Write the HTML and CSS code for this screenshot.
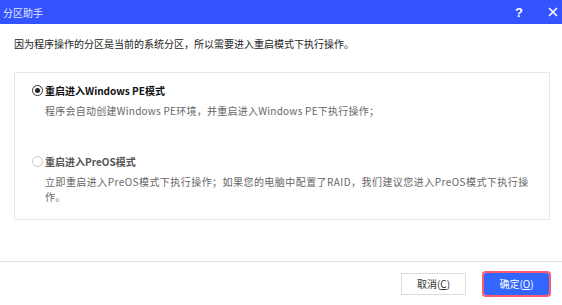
FILE: index.html
```html
<!DOCTYPE html>
<html lang="zh-CN">

<head>
    <meta charset="UTF-8">
    <title>分区助手</title>
    <link rel="stylesheet" href="styles.css">
</head>

<body>
    <div class="dialog">
        <div class="titlebar">
            <span class="title">分区助手</span>
            <div class="title-btns">
                <span class="tbtn">?</span>
                <span class="tbtn close">
                    <svg width="10" height="10" viewBox="0 0 10 10">
                        <path d="M1 1L9 9M9 1L1 9" stroke="#fff" stroke-width="1.6" />
                    </svg>
                </span>
            </div>
        </div>

        <div class="content">
            <p class="intro">因为程序操作的分区是当前的系统分区，所以需要进入重启模式下执行操作。</p>

            <div class="panel">
                <div class="option">
                    <div class="opt-head">
                        <span class="radio checked"></span>
                        <span class="opt-title">重启进入Windows PE模式</span>
                    </div>
                    <p class="opt-desc">程序会自动创建Windows PE环境，并重启进入Windows PE下执行操作；</p>
                </div>
                <div class="option second">
                    <div class="opt-head">
                        <span class="radio"></span>
                        <span class="opt-title muted">重启进入PreOS模式</span>
                    </div>
                    <p class="opt-desc">立即重启进入PreOS模式下执行操作；如果您的电脑中配置了RAID，我们建议您进入PreOS模式下执行操作。</p>
                </div>
            </div>
        </div>

        <div class="footer">
            <button class="btn">取消(<u>C</u>)</button>
            <button class="btn primary">确定(<u>O</u>)</button>
        </div>
    </div>
</body>

</html>
```

FILE: styles.css
```css
body {
    margin: 0;
    font-family: "Noto Sans CJK SC", "Noto Sans", sans-serif;
    font-size: 10px;
    color: #333;
    background: #fff;
}

.dialog {
    width: 562px;
    height: 305px;
    display: flex;
    flex-direction: column;
}

.titlebar {
    height: 24px;
    flex-shrink: 0;
    background: #3353ff;
    color: #fff;
    display: flex;
    align-items: center;
    justify-content: space-between;
    padding-left: 3px;
}

.title {
    font-size: 10px;
    color: #e4e9ff;
}

.title-btns {
    display: flex;
    align-items: center;
    gap: 17px;
}

.tbtn {
    width: 16px;
    display: flex;
    justify-content: center;
    align-items: center;
    font-family: "Liberation Sans", sans-serif;
    font-weight: bold;
    font-size: 13px;
}

.close {
    width: 18px;
}

.content {
    padding: 0 12px 0 14px;
    flex: 1;
}

.intro {
    margin: 13px 0 0;
    line-height: 14px;
    color: #222;
}

.panel {
    margin-top: 21px;
    border: 1px solid #e6e8f0;
    height: 148px;
    box-sizing: border-box;
    padding: 10px 15px 0 17px;
}

.option.second {
    margin-top: 36px;
}

.opt-head {
    display: flex;
    align-items: center;
    height: 14px;
}

.radio {
    width: 9px;
    height: 9px;
    border: 1px solid #c8c8c8;
    border-radius: 50%;
    margin-right: 2px;
    position: relative;
}

.radio.checked {
    border-color: #333;
}

.radio.checked::after {
    content: "";
    position: absolute;
    left: 2px;
    top: 2px;
    width: 5px;
    height: 5px;
    border-radius: 50%;
    background: #222;
}

.opt-title {
    font-weight: bold;
    color: #111;
}

.opt-title.muted {
    color: #555;
}

.opt-desc {
    margin: 7px 0 0 13px;
    line-height: 14px;
    color: #666;
    letter-spacing: 0.25px;
}

.second .opt-desc {
    margin-top: 6px;
    line-height: 15px;
    letter-spacing: 0.45px;
}

.footer {
    border-top: 1px solid #e2e2e2;
    margin-top: 41px;
    flex: 1;
    display: flex;
    justify-content: flex-end;
    align-items: center;
    padding-right: 13px;
    gap: 18px;
}

.btn {
    font-family: "Noto Sans CJK SC", sans-serif;
    font-size: 10px;
    width: 65px;
    height: 22px;
    border: 1px solid #d9dce3;
    background: #fff;
    color: #333;
    padding: 0;
}

.btn u {
    text-decoration: underline;
}

.btn.primary {
    background: #3366ff;
    color: #fff;
    border: 1px solid #3366ff;
    outline: 2px solid #ff5a6e;
    border-radius: 2px;
}
```
